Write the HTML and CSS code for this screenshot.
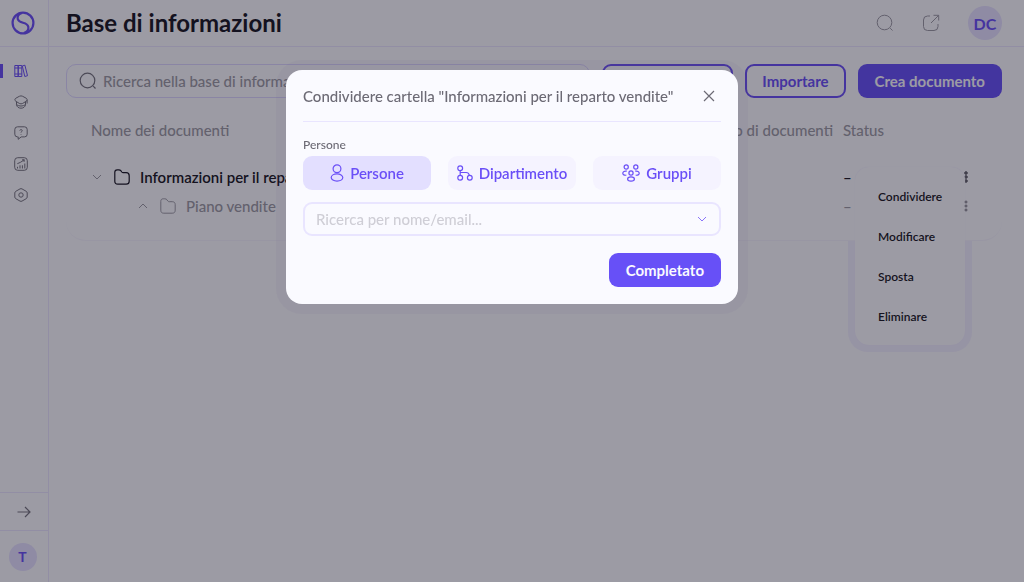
FILE: index.html
```html
<!DOCTYPE html>
<html lang="it">
<head>
    <meta charset="UTF-8">
    <meta name="viewport" content="width=device-width, initial-scale=1.0">
    <title>Base di informazioni</title>
    <link rel="stylesheet" href="styles.css">
</head>
<body>
    <div class="app">
        <aside class="sidebar">
            <a class="logo" href="#" aria-label="Home">
                <svg width="24" height="24" viewBox="0 0 24 24" stroke-width="2.200"><circle cx="12" cy="12" r="10.400"/><path d="M11 2C7.500 2.800 6 5.500 6.800 8.200c.7 2.300 2.700 2.900 5.200 3.600 2.700.7 4.800 1.600 5.300 4 .5 2.600-1 5-4.300 6.200"/></svg>
            </a>
            <nav class="menu">
                <a class="menu-link active" href="#" aria-label="Base di informazioni">
                    <svg width="14" height="14" viewBox="0 0 14 14"><path d="M.8 1.500h3.400v11H.8zM4.200 1.500h3.600v11H4.200zM.8 4h7M.8 10h7M8.300 2l2.600-.8 2.600 10.500-2.700.8z"/></svg>
                </a>
                <a class="menu-link" href="#" aria-label="Corsi">
                    <svg width="14" height="14" viewBox="0 0 14 14"><path d="M5.300 1.300q1.700-.9 3.400 0l3.400 1.900c1.400.8 1.400 2.200 0 3.100L8.700 8.400q-1.700 1-3.400 0L1.900 6.300C.5 5.400.5 4 1.900 3.200zM2.500 6.800v3c.5 2.200 2.200 3.400 4.500 3.400s4-1.200 4.500-3.400v-3M2.600 9.700c2.500 1.800 6.300 1.800 8.800 0M13.100 5v3.500"/></svg>
                </a>
                <a class="menu-link" href="#" aria-label="Domande">
                    <svg width="14" height="14" viewBox="0 0 14 14"><path d="M3.500.8h7a2.700 2.700 0 0 1 2.700 2.700v4.700a2.700 2.700 0 0 1-2.700 2.700H7.200l-3 2.400v-2.400h-.7A2.700 2.700 0 0 1 .8 8.200V3.500A2.700 2.700 0 0 1 3.500.8zM5.800 4.600c.2-1.500 2.500-1.300 2.400.1 0 .9-1.200.9-1.200 1.900M7 8v.6"/></svg>
                </a>
                <a class="menu-link" href="#" aria-label="Statistiche">
                    <svg width="14" height="14" viewBox="0 0 14 14"><rect x=".7" y=".7" width="12.600" height="12.600" rx="3"/><path d="M3.500 11.500V9.800M6 11.500V8.300M8.400 11.500V8.300M10.800 11.500V6.500M3.300 6.700l3-1.300 3.600-2.300M8 2.900l2.300-.2-.3 2.200"/></svg>
                </a>
                <a class="menu-link" href="#" aria-label="Impostazioni">
                    <svg width="14" height="14" viewBox="0 0 14 14"><path d="M6 .9q1-.5 2 0l4.200 2.400q1 .6 1 1.700v4q0 1.100-1 1.700L8 13.100q-1 .5-2 0l-4.200-2.400q-1-.6-1-1.700V5q0-1.100 1-1.700z"/><circle cx="7" cy="7" r="2.200"/></svg>
                </a>
            </nav>
            <button class="expand" type="button" aria-label="Espandi">
                <svg width="14" height="12" viewBox="0 0 14 12" stroke-width="1.200"><path d="M.5 6h12.500M8 1l5 5-5 5"/></svg>
            </button>
            <div class="team"><span class="avatar small">T</span></div>
        </aside>

        <header class="topbar">
            <h1>Base di informazioni</h1>
            <button class="icon-button" type="button" aria-label="Cerca">
                <svg width="18" height="18" viewBox="0 0 18 18"><circle cx="8.500" cy="8.500" r="7.300"/><path d="m14.200 14.200 2.300 2.300"/></svg>
            </button>
            <button class="icon-button" type="button" aria-label="Apri">
                <svg width="18" height="18" viewBox="0 0 18 18"><path d="M8 2H5.500A4 4 0 0 0 1.500 6v6.500a4 4 0 0 0 4 4H12a4 4 0 0 0 4-4V10M9 9l7.500-7.500M11.500 1.300h5.200v5.200"/></svg>
            </button>
            <span class="avatar">DC</span>
        </header>

        <main class="content">
            <div class="toolbar">
                <label class="search">
                    <svg width="18" height="18" viewBox="0 0 18 18" stroke-width="1.200"><circle cx="8.500" cy="8.500" r="7.300"/><path d="m14.200 14.200 2.300 2.300"/></svg>
                    <input type="text" placeholder="Ricerca nella base di informazioni" aria-label="Ricerca nella base di informazioni">
                </label>
                <button class="button outline" type="button">Creare cartella</button>
                <button class="button outline" type="button">Importare</button>
                <button class="button" type="button">Crea documento</button>
            </div>

            <table class="docs">
                <thead>
                    <tr>
                        <th class="name">Nome dei documenti</th>
                        <th class="count">Numero di documenti</th>
                        <th class="status">Status</th>
                        <th class="more"></th>
                    </tr>
                </thead>
                <tbody>
                    <tr class="folder">
                        <td><div class="cell">
                            <svg width="10" height="6" viewBox="0 0 10 6"><path d="m1 1 4 4 4-4"/></svg>
                            <svg width="16" height="16" viewBox="0 0 16 16" stroke-width="1.200"><path d="M.8 3.300C.8 1.700 1.600.8 3.200.8h1.600c1.200 0 1.600.3 2.200 1.100l.8 1.100c.4.500.7.700 1.400.7h3c2 0 3 1 3 3v5.500c0 2-1 3-3 3H3.800c-2 0-3-1-3-3z"/></svg>
                            <span>Informazioni per il reparto vendite</span>
                        </div></td>
                        <td></td>
                        <td>–</td>
                        <td class="more">
                            <button class="dots" type="button" aria-label="Azioni">
                                <svg width="4" height="12" viewBox="0 0 4 12"><circle cx="2" cy="2" r="1.200"/><circle cx="2" cy="6" r="1.200"/><circle cx="2" cy="10" r="1.200"/></svg>
                            </button>
                            <div class="dropdown">
                                <button type="button">Condividere</button>
                                <button type="button">Modificare</button>
                                <button type="button">Sposta</button>
                                <button type="button">Eliminare</button>
                            </div>
                        </td>
                    </tr>
                    <tr class="subfolder">
                        <td><div class="cell">
                            <svg width="10" height="6" viewBox="0 0 10 6"><path d="m1 5 4-4 4 4"/></svg>
                            <svg width="16" height="16" viewBox="0 0 16 16"><path d="M.8 3.300C.8 1.700 1.600.8 3.200.8h1.600c1.200 0 1.600.3 2.200 1.100l.8 1.100c.4.500.7.700 1.400.7h3c2 0 3 1 3 3v5.500c0 2-1 3-3 3H3.800c-2 0-3-1-3-3z"/></svg>
                            <span>Piano vendite</span>
                        </div></td>
                        <td></td>
                        <td>–</td>
                        <td class="more">
                            <button class="dots" type="button" aria-label="Azioni">
                                <svg width="4" height="12" viewBox="0 0 4 12"><circle cx="2" cy="2" r="1"/><circle cx="2" cy="6" r="1"/><circle cx="2" cy="10" r="1"/></svg>
                            </button>
                        </td>
                    </tr>
                </tbody>
            </table>
        </main>
    </div>

    <div class="overlay">
        <form class="modal" role="dialog" aria-labelledby="modal-title">
            <div class="modal-header">
                <h2 id="modal-title">Condividere cartella "Informazioni per il reparto vendite"</h2>
                <button class="close" type="button" aria-label="Chiudi">
                    <svg width="12" height="12" viewBox="0 0 12 12" stroke-width="1.200"><path d="m1 1 10 10M11 1 1 11"/></svg>
                </button>
            </div>
            <label class="field-label" for="share-search">Persone</label>
            <div class="tabs">
                <button class="tab selected" type="button">
                    <svg width="14" height="18" viewBox="0 0 14 18" stroke-width="1.200"><circle cx="7" cy="4.800" r="3.900"/><ellipse cx="7" cy="13.500" rx="5.800" ry="3.600"/></svg>
                    Persone
                </button>
                <button class="tab" type="button">
                    <svg width="16" height="16" viewBox="0 0 16 16" stroke-width="1.200"><circle cx="3.200" cy="3.200" r="2.400"/><circle cx="3.200" cy="12.800" r="2.400"/><circle cx="12.800" cy="12.800" r="2.400"/><path d="M3.200 5.600v4.800M3.200 7.500h6q2.500 0 3.200 2.900"/></svg>
                    Dipartimento
                </button>
                <button class="tab" type="button">
                    <svg width="18" height="18" viewBox="0 0 18 18" stroke-width="1.200"><circle cx="4.200" cy="3" r="2.100"/><circle cx="13.800" cy="3" r="2.100"/><circle cx="9" cy="9" r="2.100"/><ellipse cx="9" cy="15" rx="3.400" ry="2.200"/><path d="M4.800 7.200C2.500 6.600.8 7.700.8 9.200s1.500 2.300 3.500 2M13.200 7.200c2.300-.6 4 .5 4 2s-1.500 2.300-3.500 2"/></svg>
                    Gruppi
                </button>
            </div>
            <div class="select">
                <input id="share-search" type="text" placeholder="Ricerca per nome/email...">
                <svg width="10" height="6" viewBox="0 0 10 6"><path d="m1 1 4 4 4-4"/></svg>
            </div>
            <button class="button done" type="submit">Completato</button>
        </form>
    </div>
</body>
</html>
```
FILE: styles.css
```css
* {
    box-sizing: border-box;
}
body {
    margin: 0;
    font-family: Lato, "Open Sans", sans-serif;
    font-size: 15px;
    font-weight: 500;
    background-color: #fafaff;
    color: #181624;
}
button, input {
    font: inherit;
    color: inherit;
}
button {
    border: none;
    background: none;
    padding: 0;
    cursor: pointer;
}
svg {
    flex: none;
    fill: none;
    stroke: currentColor;
}
.app {
    display: grid;
    grid-template: 47px 1fr / 49px 1fr;
    min-height: 100vh;
}

.sidebar {
    grid-row: 1 / 3;
    display: flex;
    flex-direction: column;
    border-right: 1px solid #e9e5ff;
}
.logo {
    display: grid;
    place-items: center;
    height: 47px;
    padding-right: 2px;
    border-bottom: 1px solid #e9e5ff;
    color: #6a4ff7;
}
.menu {
    display: grid;
    gap: 17px;
    padding-top: 17px;
    margin-bottom: auto;
}
.menu-link {
    display: flex;
    padding-left: 14px;
    color: #75737f;
}
.menu-link.active {
    color: #6a4ff7;
    border-left: 3px solid #6a4ff7;
    border-radius: 0 2px 2px 0;
    padding-left: 11px;
}
.expand {
    height: 39px;
    border-top: 1px solid #e9e5ff;
    border-bottom: 1px solid #e9e5ff;
    color: #75737f;
}
.team {
    display: grid;
    place-items: center;
    height: 51px;
    padding-right: 3px;
}
.avatar {
    display: grid;
    place-items: center;
    width: 34px;
    height: 34px;
    border-radius: 50%;
    background-color: #e4dfff;
    color: #6a4ff7;
    font-size: 16px;
    font-weight: 700;
}
.avatar.small {
    width: 28px;
    height: 28px;
    font-size: 14px;
}

.topbar {
    display: flex;
    align-items: center;
    gap: 28px;
    padding: 0 22px 0 17px;
    border-bottom: 1px solid #e9e5ff;
}
.topbar h1 {
    margin: 0 auto 0 0;
    font-size: 24px;
    line-height: 28px;
    font-weight: 700;
}
.icon-button {
    display: flex;
    color: #9b99a4;
}

.content {
    position: relative;
    z-index: 0;
    padding: 17px 22px 17px 17px;
}
.toolbar {
    display: flex;
    gap: 12px;
}
.search {
    display: flex;
    flex: 1;
    align-items: center;
    gap: 6px;
    height: 34px;
    padding: 0 12px;
    border: 1px solid #dcd6ff;
    border-radius: 10px;
    color: #75737f;
}
.search input, .select input {
    flex: 1;
    min-width: 0;
    padding: 0;
    border: none;
    outline: none;
    background: none;
}
.search input::placeholder {
    color: #9b99a4;
}
.button {
    height: 34px;
    padding: 0 17px;
    border-radius: 9px;
    background-color: #6750f7;
    color: #fafaff;
    font-weight: 700;
}
.button.outline {
    border: 2px solid #6a4ff7;
    padding: 0 15px;
    background: none;
    color: #6a4ff7;
}

.docs {
    width: 100%;
    margin-top: 10px;
    padding-bottom: 19px;
    border-spacing: 0;
    border-bottom: 1px solid #f4f2fd;
    border-radius: 0 0 20px 20px;
    background-color: #fafaff;
}
.docs th, .docs td {
    padding: 0;
    text-align: left;
}
.docs th {
    height: 44px;
    color: #9b99a4;
    font-weight: 500;
}
.docs .name {
    padding-left: 25px;
}
.docs .count {
    width: 154px;
}
.docs .status {
    width: 99px;
}
.docs .more {
    position: relative;
    width: 60px;
    padding-left: 22px;
}
.docs .folder td {
    height: 39px;
    padding-top: 10px;
    font-weight: 600;
}
.docs .subfolder td {
    height: 30px;
    color: #9b99a4;
}
.cell {
    display: flex;
    align-items: center;
    gap: 10px;
    padding-left: 26px;
}
.subfolder .cell {
    padding-left: 72px;
}
.cell svg:first-child {
    color: #9b99a4;
    margin-right: 2px;
}
.dots {
    display: flex;
}
.docs .subfolder .dots {
    color: #75737f;
}
.dropdown {
    position: absolute;
    top: 15px;
    right: 37px;
    display: grid;
    width: 110px;
    padding: 9px 0;
    border-radius: 14px;
    background-color: #fafaff;
    box-shadow: 0 0 1px #e9e5ff;
    font-size: 12px;
}
/* soft ring, stays under the table */
.dropdown::before {
    content: "";
    position: absolute;
    inset: -7px;
    z-index: -1;
    border-radius: 20px;
    background-color: #f1eeff;
}
.dropdown button {
    height: 40px;
    padding-left: 23px;
    text-align: left;
}

.overlay {
    position: fixed;
    inset: 0;
    display: flex;
    align-items: flex-start;
    justify-content: center;
    padding-top: 70px;
    background-color: rgba(16, 12, 28, 0.4);
}
.modal {
    display: flex;
    flex-direction: column;
    width: 452px;
    padding: 0 17px 17px;
    border-radius: 16px;
    background-color: #fafaff;
    box-shadow: 0 0 0 10px rgba(100, 90, 130, 0.06);
    color: #6c6a75;
}
.modal-header {
    display: flex;
    align-items: center;
    justify-content: space-between;
    height: 52px;
    padding-right: 6px;
    border-bottom: 1px solid #e9e5ff;
}
.modal-header h2 {
    margin: 0;
    font-size: 15px;
    font-weight: 500;
}
.close {
    display: flex;
}
.field-label {
    margin-top: 14px;
    font-size: 12px;
    line-height: 17px;
}
.tabs {
    display: grid;
    grid-template-columns: repeat(3, 1fr);
    gap: 17px;
    margin-top: 3px;
}
.tab {
    display: flex;
    align-items: center;
    justify-content: center;
    gap: 6px;
    height: 34px;
    border-radius: 9px;
    background-color: #f5f3ff;
    color: #6a4ff7;
    font-weight: 600;
}
.tab.selected {
    background-color: #e3dfff;
}
.select {
    display: flex;
    align-items: center;
    height: 34px;
    margin-top: 12px;
    padding: 0 12px 0 11px;
    border: 2px solid #e9e5ff;
    border-radius: 9px;
    color: #8a75f9;
}
.select input {
    color: #75737f;
}
.select input::placeholder {
    color: #cfced6;
}
.done {
    align-self: flex-end;
    margin-top: 17px;
}
```
